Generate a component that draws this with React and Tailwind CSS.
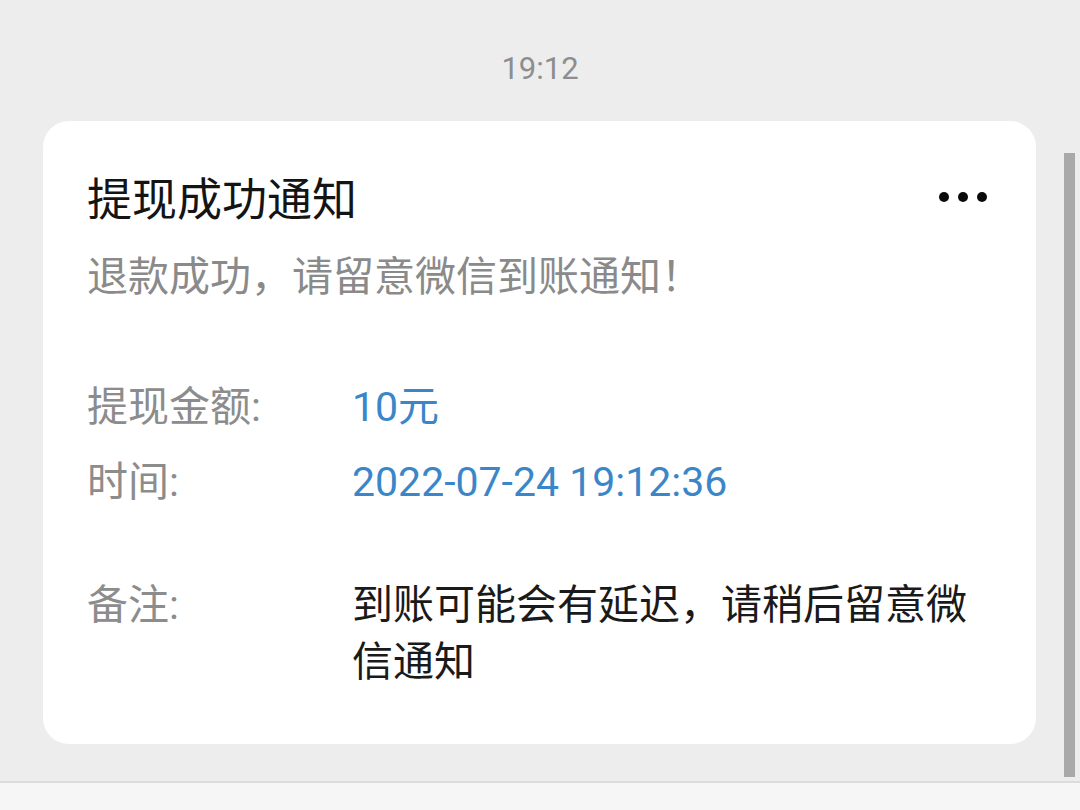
import React from "react";

const font = { fontFamily: '"Roboto", "Noto Sans CJK SC", "Noto Sans", sans-serif' };

export default function App() {
  return (
    <div
      className="relative w-[1080px] h-[810px] bg-[#ededed] flex flex-col overflow-hidden"
      style={font}
    >
      <div className="h-[121px] pt-[50px] text-center text-[31px] leading-[38px] text-[#8e8e8e]">
        19:12
      </div>

      <div className="flex-1 flex flex-col">
        <div className="ml-[43px] w-[993px] h-[623px] bg-white rounded-[26px] px-[44px] pt-[52px]">
          <div className="flex items-center justify-between">
            <div className="text-[45px] leading-[56px] text-[#141414]">提现成功通知</div>
            <div className="flex gap-[9px] mr-[5px] mb-[8px]">
              <span className="w-[10px] h-[10px] rounded-full bg-[#0a0a0a]" />
              <span className="w-[10px] h-[10px] rounded-full bg-[#0a0a0a]" />
              <span className="w-[10px] h-[10px] rounded-full bg-[#0a0a0a]" />
            </div>
          </div>
          <div className="mt-[20px] text-[41px] leading-[56px] text-[#8a8a8a]">
            退款成功，请留意微信到账通知！
          </div>

          <div className="mt-[74px] flex text-[41px] leading-[56px]">
            <div className="w-[265px] text-[#8c8c8c]">提现金额:</div>
            <div className="text-[#3b86c9]">10元</div>
          </div>
          <div className="mt-[19px] flex text-[41px] leading-[56px]">
            <div className="w-[265px] text-[#8c8c8c]">时间:</div>
            <div className="text-[#3b86c9]">2022-07-24 19:12:36</div>
          </div>
          <div className="mt-[67px] flex text-[41px] leading-[57px]">
            <div className="w-[265px] shrink-0 text-[#8c8c8c]">备注:</div>
            <div className="w-[630px] text-[#1a1a1a]">到账可能会有延迟，请稍后留意微信通知</div>
          </div>
        </div>
        <div className="flex-1" />
      </div>

      <div className="h-[29px] border-t-2 border-[#dcdcdc] bg-[#f6f6f6]" />

      <div className="absolute left-[1064px] top-[153px] w-[11px] h-[624px] bg-[#a9a9a9]" />
    </div>
  );
}
